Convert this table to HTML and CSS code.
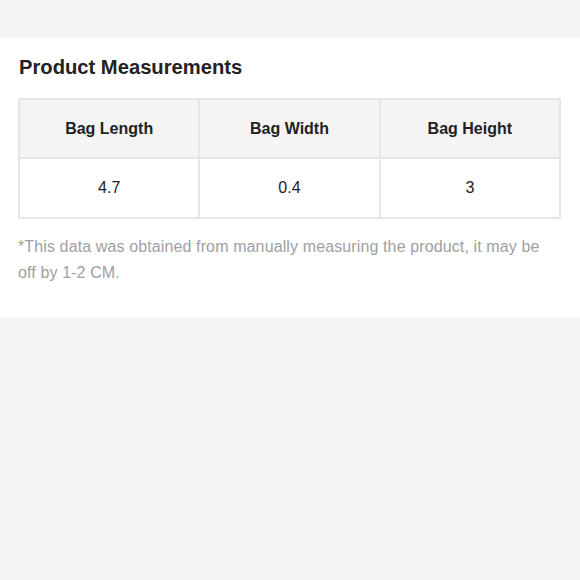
FILE: index.html
```html
<!DOCTYPE html>
<html>
<head>
<meta charset="utf-8">
<link rel="stylesheet" href="styles.css">
</head>
<body>
<section class="panel">
  <h2 class="title">Product Measurements</h2>
  <table class="measure">
    <thead>
      <tr><th>Bag Length</th><th>Bag Width</th><th>Bag Height</th></tr>
    </thead>
    <tbody>
      <tr><td>4.7</td><td>0.4</td><td>3</td></tr>
    </tbody>
  </table>
  <p class="note">*This data was obtained from manually measuring the product, it may be off by 1-2 CM.</p>
</section>
</body>
</html>
```
FILE: styles.css
```css
html, body {
  margin: 0;
  padding: 0;
  background: #f4f4f4;
  font-family: "Liberation Sans", Arial, sans-serif;
}
.panel {
  margin-top: 38px;
  background: #fff;
  padding: 17px 19px 33px 18px;
  height: 230px;
}
.title {
  margin: 0;
  font-size: 20.2px;
  line-height: 24px;
  font-weight: bold;
  color: #222;
  padding-left: 1px;
}
.measure {
  margin-top: 19px;
  width: 100%;
  border-collapse: collapse;
  table-layout: fixed;
}
.measure th, .measure td {
  border: 2px solid #e6e6e6;
  text-align: center;
  font-size: 16px;
  color: #222;
  padding: 0;
}
.measure th {
  background: #f4f4f4;
  font-weight: bold;
  height: 57px;
}
.measure td {
  height: 58px;
}
.note {
  margin: 15px 0 0;
  font-size: 16px;
  line-height: 26px;
  letter-spacing: 0.12px;
  color: #a0a0a0;
}
```
